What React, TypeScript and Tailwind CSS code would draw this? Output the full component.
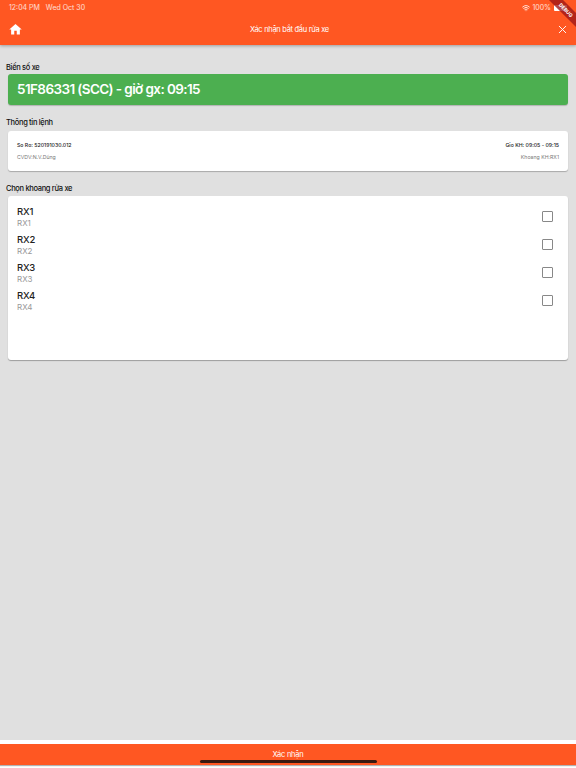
import { X, Wifi } from "lucide-react";
import { MdHome } from "react-icons/md";

const BAYS = ["RX1", "RX2", "RX3", "RX4"];

export default function App() {
  return (
    <div className="relative flex h-[768px] w-[576px] flex-col overflow-hidden bg-[#e0e0e0] font-['Inter',sans-serif]">
      {/* status + app bar */}
      <header className="relative h-[45px] shrink-0 bg-[#ff5722] text-white shadow-[0_1px_3px_rgba(0,0,0,0.3)]">
        <div className="flex h-[14px] items-center justify-between pl-[9px] pr-[9px] pt-[2px] text-[7px] text-white/80">
          <div className="flex gap-[6px]">
            <span>12:04 PM</span>
            <span>Wed Oct 30</span>
          </div>
          <div className="flex items-center gap-[2px]">
            <Wifi className="h-[8px] w-[8px]" strokeWidth={3} />
            <span>100%</span>
            <div className="ml-[1px] h-[6px] w-[13px] rounded-[1px] bg-white" />
          </div>
        </div>
        <div className="flex h-[31px] items-center justify-between pl-[8px] pr-[7px]">
          <MdHome className="h-[15px] w-[15px]" />
          <span className="text-[7.5px] tracking-[-0.3px]">Xác nhận bắt đầu rửa xe</span>
          <X className="h-[13px] w-[13px]" strokeWidth={1.75} />
        </div>
      </header>

      {/* debug ribbon */}
      <div className="absolute right-[-21px] top-[5px] w-[62px] rotate-45 bg-[#a01818]/80 text-center text-[5px] font-bold leading-[10px] text-white">
        DEBUG
      </div>

      <main className="flex-1 px-[6px]">
        <h2 className="mt-[18px] text-[7.5px] font-medium leading-[10px] tracking-[-0.33px] text-[#111]">Biến số xe</h2>
        <div className="mx-[2px] mt-[1px] flex h-[31px] items-center rounded-[3px] bg-[#4caf50] pl-[9px] text-[13.5px] font-semibold tracking-[-0.6px] text-white shadow-[0_1px_1px_rgba(0,0,0,0.2)]">
          51F86331 (SCC) - giờ gx: 09:15
        </div>

        <h2 className="mt-[13px] text-[7.5px] font-medium leading-[10px] tracking-[-0.33px] text-[#111]">Thông tin lệnh</h2>
        <div className="mx-[2px] mt-[3px] flex h-[40px] flex-col justify-center gap-[6px] rounded-[3px] bg-white px-[9px] text-[5.2px] leading-[6px] shadow-[0_1px_1px_rgba(0,0,0,0.25)]">
          <div className="flex justify-between font-medium text-[#222]">
            <span>So Ro: 520191030.012</span>
            <span>Gio KH: 09:05 - 09:15</span>
          </div>
          <div className="flex justify-between text-[#777]">
            <span>CVDV:N.V.Dũng</span>
            <span>Khoang KH:RX1</span>
          </div>
        </div>

        <h2 className="mt-[13px] text-[7.5px] font-medium leading-[10px] tracking-[-0.33px] text-[#111]">Chọn khoang rửa xe</h2>
        <div className="mx-[2px] mt-[2px] h-[164px] rounded-[3px] bg-white px-[9px] pt-[6px] shadow-[0_1px_1px_rgba(0,0,0,0.3)]">
          {BAYS.map((bay) => (
            <div key={bay} className="flex h-[28px] items-center justify-between">
              <div className="mt-[1px]">
                <div className="text-[9.5px] font-medium leading-[12px] tracking-[-0.2px] text-[#222]">{bay}</div>
                <div className="text-[8px] leading-[10px] text-[#999]">{bay}</div>
              </div>
              <div className="mr-[6px] h-[11px] w-[11px] rounded-[1px] border-[1.5px] border-[#888]" />
            </div>
          ))}
        </div>
      </main>

      {/* bottom action */}
      <footer className="h-[28px] shrink-0 bg-white pt-[4px]">
        <div className="flex h-[21px] items-center justify-center bg-[#ff5722] text-[7.5px] tracking-[-0.2px] text-white shadow-[0_1px_1px_rgba(0,0,0,0.3)]">
          Xác nhận
        </div>
      </footer>
      <div className="absolute bottom-[5px] left-[200px] h-[3px] w-[177px] rounded-full bg-[#3a1a10]" />
    </div>
  );
}
